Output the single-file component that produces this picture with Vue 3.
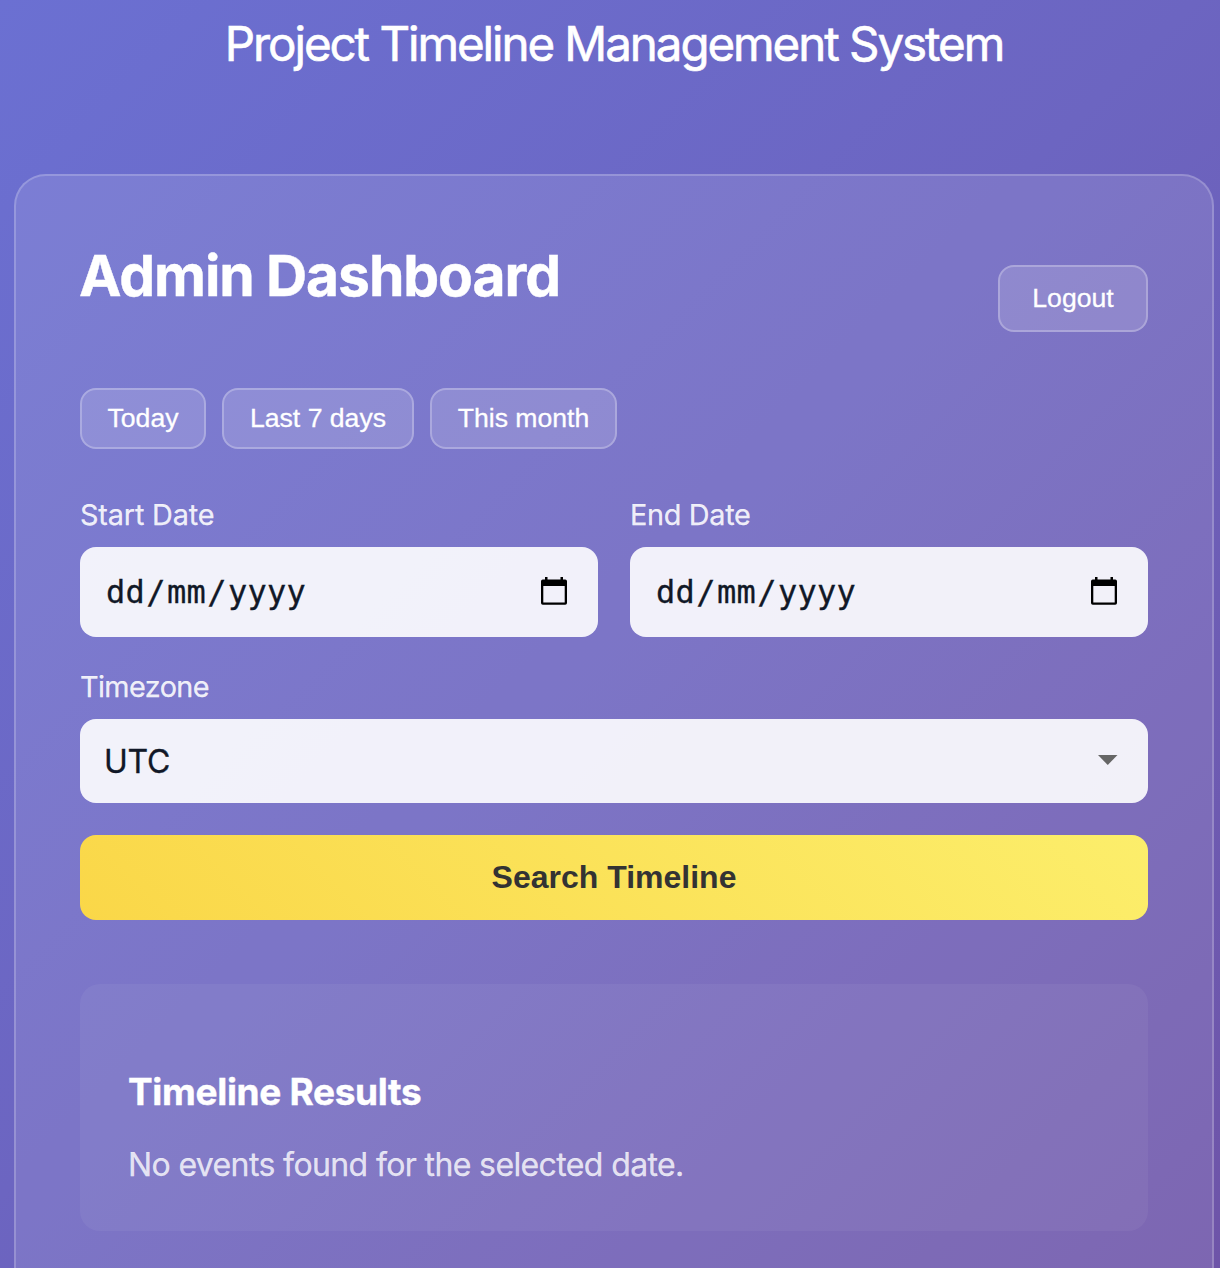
<script setup>
import { ref } from 'vue'

const ranges = ['Today', 'Last 7 days', 'This month']
const dates = [
  { id: 'start', label: 'Start Date' },
  { id: 'end', label: 'End Date' },
]
const timezone = ref('UTC')
</script>

<template>
  <div class="page">
    <p class="subtitle"><span>Project Timeline Management System</span></p>
    <main class="card">
      <header class="head">
        <h1><span>Admin Dashboard</span></h1>
        <button class="ghost logout"><span>Logout</span></button>
      </header>
      <div class="ranges">
        <button v-for="(range, i) in ranges" :key="range" class="ghost range" :class="'range-' + i">
          <span>{{ range }}</span>
        </button>
      </div>
      <div class="dates">
        <div v-for="d in dates" :key="d.id" class="field">
          <div class="label"><span :class="'label-' + d.id">{{ d.label }}</span></div>
          <div class="control date">
            <span class="mask">dd<i>/</i>mm<i>/</i>yyyy</span>
            <svg class="calendar" width="26" height="28" viewBox="0 0 26 28">
              <path
                fill="#000"
                fill-rule="evenodd"
                d="M4 0h2.500v2.500h13V0H22v2.500h2.200a1.800 1.800 0 0 1 1.800 1.800v21.700a1.800 1.800 0 0 1-1.800 1.800H1.800A1.800 1.800 0 0 1 0 26V4.300a1.800 1.800 0 0 1 1.800-1.800H4zM2.300 9v16.500h21.400V9z"
              />
            </svg>
          </div>
        </div>
      </div>
      <div class="field zone">
        <div class="label"><span class="label-zone">Timezone</span></div>
        <div class="control select">
          <span class="value">{{ timezone }}</span>
          <svg class="caret" width="20" height="10" viewBox="0 0 20 10"><path fill="#666" d="M0 0h19.500L9.750 10z" /></svg>
        </div>
      </div>
      <button class="search"><span>Search Timeline</span></button>
      <section class="results">
        <h2><span>Timeline Results</span></h2>
        <p><span>No events found for the selected date.</span></p>
      </section>
    </main>
  </div>
</template>

<style>
body {
  margin: 0;
  overflow: hidden;
}
</style>

<style scoped>
* {
  box-sizing: border-box;
}
.page {
  height: 1268px;
  overflow: hidden;
  padding: 8px 6px 0 14px;
  background: linear-gradient(135deg, #6b70d2 0%, #6c65c1 48%, #6e54a8 100%);
  font-family: Inter, 'Liberation Sans', sans-serif;
  color: #fff;
}
h1,
h2,
p {
  margin: 0;
  white-space: nowrap;
}
button {
  margin: 0;
  padding: 0;
  font-family: 'Liberation Sans', Arial, sans-serif;
}
.subtitle {
  height: 166px;
  font-size: 47.500px;
  line-height: 71px;
  text-align: center;
  letter-spacing: -2.070px;
  -webkit-text-stroke: 0.600px #fff;
}
.card {
  height: 1200px;
  padding: 64px;
  border: 2px solid rgba(255, 255, 255, 0.2);
  border-radius: 32px;
  background: rgba(255, 255, 255, 0.11);
}
.head {
  display: flex;
  justify-content: space-between;
  height: 148px;
}
h1 {
  margin-left: -1px;
  font-size: 57px;
  line-height: 72px;
  font-weight: 700;
  letter-spacing: -1.100px;
  -webkit-text-stroke: 0.400px #fff;
}
.ghost {
  padding-bottom: 2px;
  border: 2px solid rgba(255, 255, 255, 0.25);
  border-radius: 16px;
  background: rgba(255, 255, 255, 0.15);
  color: #fff;
  font-size: 26.600px;
  line-height: 30px;
  -webkit-text-stroke: 0.3px #fff;
}
.logout {
  width: 150px;
  height: 67px;
  margin-top: 25px;
}
.ranges {
  display: flex;
  gap: 16px;
}
.range {
  height: 61px;
}
.range-0 {
  width: 126px;
}
.range-1 {
  width: 192px;
}
.range-2 {
  width: 187px;
}
.dates {
  display: grid;
  grid-template-columns: 1fr 1fr;
  gap: 32px;
  margin-top: 48px;
}
.label {
  height: 50px;
  font-size: 28.800px;
  line-height: 36px;
  color: rgba(255, 255, 255, 0.9);
  -webkit-text-stroke: 0.250px rgba(255, 255, 255, 0.9);
}
.label-start {
  letter-spacing: -0.150px;
}
.label-end {
  letter-spacing: -0.300px;
}
.label-zone {
  letter-spacing: -0.600px;
}
.control {
  display: flex;
  align-items: center;
  justify-content: space-between;
  border-radius: 16px;
  background: rgba(255, 255, 255, 0.9);
  color: #111827;
}
.date {
  height: 90px;
  padding: 0 31px 0 26px;
}
.mask {
  font-family: 'DejaVu Sans Mono', monospace;
  font-size: 32px;
  letter-spacing: 0.200px;
  -webkit-text-stroke: 0.300px #111827;
}
.mask i {
  padding: 0 1.300px;
  font-style: normal;
}
.calendar {
  margin-bottom: 2px;
}
.zone {
  margin-top: 32px;
}
.select {
  height: 84px;
  padding: 0 30px 0 24px;
}
.value {
  font-size: 32px;
  letter-spacing: -0.300px;
  -webkit-text-stroke: 0.300px #111827;
}
.caret {
  margin-bottom: 2px;
}
.search {
  display: block;
  width: 100%;
  height: 85px;
  margin-top: 32px;
  border: 0;
  border-radius: 16px;
  background: linear-gradient(45deg, #fad748, #fcee6b);
  color: #333;
  font-size: 32px;
  font-weight: 700;
}
.results {
  height: 247px;
  margin-top: 64px;
  padding: 84px 48px 0;
  border-radius: 20px;
  background: rgba(255, 255, 255, 0.05);
}
h2 {
  height: 73px;
  font-size: 37px;
  line-height: 48px;
  font-weight: 700;
  letter-spacing: -0.330px;
  -webkit-text-stroke: 0.400px #fff;
}
.results p {
  font-size: 32px;
  line-height: 48px;
  letter-spacing: -0.620px;
  color: rgba(255, 255, 255, 0.8);
  -webkit-text-stroke: 0.250px rgba(255, 255, 255, 0.8);
}
</style>
